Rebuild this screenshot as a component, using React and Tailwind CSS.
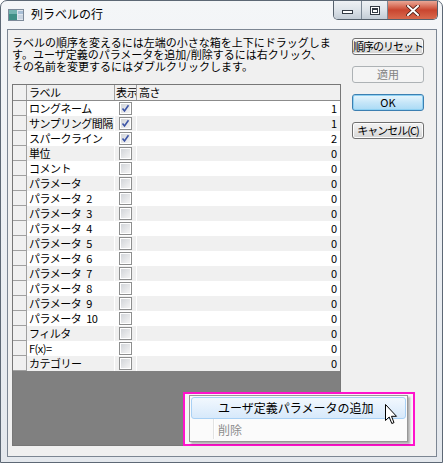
const rows = [
  ['ロングネーム', true, 1],
  ['サンプリング間隔', true, 1],
  ['スパークライン', true, 2],
  ['単位', false, 0],
  ['コメント', false, 0],
  ['パラメータ', false, 0],
  ['パラメータ 2', false, 0],
  ['パラメータ 3', false, 0],
  ['パラメータ 4', false, 0],
  ['パラメータ 5', false, 0],
  ['パラメータ 6', false, 0],
  ['パラメータ 7', false, 0],
  ['パラメータ 8', false, 0],
  ['パラメータ 9', false, 0],
  ['パラメータ 10', false, 0],
  ['フィルタ', false, 0],
  ['F(x)=', false, 0],
  ['カテゴリー', false, 0],
];

function CheckBox({ checked }) {
  return (
    <div className="w-[13px] h-[13px] border border-[#8e8f8f] bg-white p-[1px]">
      <div className="w-full h-full bg-gradient-to-br from-[#d2d5d9] to-[#f4f4f4] relative">
        {checked && (
          <svg viewBox="0 0 9 9" className="absolute inset-0 w-[9px] h-[9px]">
            <path d="M1.5 4.5 L3.5 7 L7.5 1.2" fill="none" stroke="#3d55a6" strokeWidth="1.6" />
          </svg>
        )}
      </div>
    </div>
  );
}

function Button({ children, variant }) {
  if (variant === 'disabled') {
    return (
      <div className="h-[17px] w-[72px] rounded-[3px] border border-[#adb2b5] bg-[#f4f4f4] flex items-center justify-center text-[#838383] leading-none whitespace-nowrap">
        {children}
      </div>
    );
  }
  if (variant === 'default') {
    return (
      <div className="h-[17px] w-[72px] rounded-[3px] border border-[#3c7fb1] bg-gradient-to-b from-[#e8f6fd] via-[#c6e6f8] to-[#a9daf5] shadow-[inset_0_0_0_1px_#8ed0f2] flex items-center justify-center leading-none whitespace-nowrap">
        {children}
      </div>
    );
  }
  return (
    <div className="h-[17px] w-[72px] rounded-[3px] border border-[#707070] bg-gradient-to-b from-[#f2f2f2] via-[#e6e6e6] to-[#d4d4d4] shadow-[inset_0_0_0_1px_#fcfcfc] flex items-center justify-center leading-none whitespace-nowrap tracking-[-1px]">
      {children}
    </div>
  );
}

function TitleIcon() {
  return (
    <svg width="16" height="12" viewBox="0 0 16 12">
      <rect x="0.5" y="0.5" width="15" height="11" fill="#dfe6ee" stroke="#7d8a99" />
      <rect x="1" y="1" width="8" height="10" fill="#3f8f86" />
      <rect x="1" y="1" width="8" height="4" fill="#73b3b0" />
      <rect x="10" y="2" width="5" height="3" fill="#a8bfd6" />
      <rect x="10" y="6" width="5" height="4" fill="#c9d5e2" />
    </svg>
  );
}

function WindowButtons() {
  return (
    <div className="flex h-[19px] rounded-b-[5px] border border-t-0 border-[#55606c] overflow-hidden">
      <div className="w-[28px] h-full bg-gradient-to-b from-[#eef1f4] via-[#dde3e9] to-[#c3ccd6] border-r border-[#7b8794] flex items-center justify-center">
        <div className="w-[11px] h-[4px] mt-[4px] border border-[#333a44] bg-white" />
      </div>
      <div className="w-[26px] h-full bg-gradient-to-b from-[#eef1f4] via-[#dde3e9] to-[#c3ccd6] border-r border-[#7b8794] flex items-center justify-center">
        <div className="w-[10px] h-[9px] border border-[#333a44] bg-white p-[1px]">
          <div className="w-full h-full border border-t-2 border-[#333a44]" />
        </div>
      </div>
      <div className="w-[49px] h-full bg-gradient-to-b from-[#e9a796] via-[#c9452f] to-[#d96a4e] flex items-center justify-center">
        <svg width="14" height="11" viewBox="0 0 14 11">
          <path d="M2 1 L12 10 M12 1 L2 10" stroke="#4a1c14" strokeWidth="3.6" strokeLinecap="square" />
          <path d="M2 1 L12 10 M12 1 L2 10" stroke="#ffffff" strokeWidth="2" strokeLinecap="square" />
        </svg>
      </div>
    </div>
  );
}

function Cursor() {
  return (
    <svg width="13" height="21" viewBox="0 0 13 21">
      <path
        d="M0.5 0.5 L0.5 16.5 L4.2 13 L6.8 19.5 L9 18.6 L6.5 12.3 L11.5 12.3 Z"
        fill="#ffffff"
        stroke="#000000"
        strokeWidth="1"
        strokeLinejoin="miter"
      />
    </svg>
  );
}

export default function App() {
  return (
    <div className="w-[443px] h-[464px] bg-white text-[11px] text-black font-['Noto_Sans_CJK_JP',sans-serif]">
      <div className="w-[443px] h-[463px] rounded-t-[7px] border border-[#5d6875] bg-gradient-to-b from-[#f4f6f8] via-[#eceff3] to-[#e4e8ed] flex flex-col">
        {/* title bar */}
        <div className="h-[28px] flex items-start shrink-0">
          <div className="ml-[7px] mt-[8px]">
            <TitleIcon />
          </div>
          <div className="ml-[7px] mt-[5px] text-[12px] leading-[16px]">列ラベルの行</div>
          <div className="ml-auto mr-[4px]">
            <WindowButtons />
          </div>
        </div>

        {/* client area */}
        <div className="relative flex-1 ml-[6px] mr-[5px] mb-[5px] border border-[#7c8693] bg-[#f0f0f0] flex">
          <div className="ml-[4px] w-[329px] flex flex-col">
            <div className="mt-[6px] leading-[12px] whitespace-nowrap">
              <div>ラベルの順序を変えるには左端の小さな箱を上下にドラッグしま</div>
              <div>す。ユーザ定義のパラメータを追加/削除するには右クリック、</div>
              <div>その名前を変更するにはダブルクリックします。</div>
            </div>

            <div className="mt-[12px] h-[362px] border border-[#777777] flex flex-col bg-[#808080]">
              <div className="h-[16px] flex bg-[#f0f0f0] border-b border-[#8c8c8c] leading-[15px]">
                <div className="w-[14px] shrink-0 border-r border-[#a0a0a0]" />
                <div className="w-[88px] shrink-0 pl-[2px] border-r border-[#a0a0a0] tracking-[-0.5px]">ラベル</div>
                <div className="w-[22px] shrink-0 pl-[1px] border-r border-[#a0a0a0] overflow-hidden whitespace-nowrap">表示</div>
                <div className="flex-1 pl-[2px] tracking-[-0.5px]">高さ</div>
              </div>
              {rows.map(([label, checked, value], i) => (
                <div
                  key={label}
                  className={`h-[15px] flex leading-[15px] ${i % 2 === 0 ? 'bg-white' : 'bg-[#f0f0f0]'}`}
                >
                  <div className="w-[14px] shrink-0 bg-[#f0f0f0] border-r border-b border-[#a0a0a0]" />
                  <div className="w-[88px] shrink-0 pl-[2px] border-r border-white whitespace-nowrap overflow-hidden tracking-[-0.5px] [word-spacing:3px]">{label}</div>
                  <div className="w-[22px] shrink-0 border-r border-white flex items-center justify-center">
                    <CheckBox checked={checked} />
                  </div>
                  <div className="flex-1 text-right pr-[3px]">{value}</div>
                </div>
              ))}
            </div>
          </div>

          <div className="ml-[11px] mt-[8px] flex flex-col gap-[11px]">
            <Button>順序のリセット</Button>
            <Button variant="disabled">適用</Button>
            <Button variant="default">OK</Button>
            <Button>キャンセル(C)</Button>
          </div>

          {/* context menu with highlight */}
          <div className="absolute left-[175px] top-[362px] w-[232px] h-[54px] border-2 border-[#ff12cc] bg-[#f6f6f6]">
            <div className="ml-[4px] mt-[1px] w-[219px] h-[47px] border border-[#979797] bg-[#fbfbfb] shadow-[2px_2px_2px_rgba(0,0,0,0.3)] flex flex-col pt-[1px] px-[1px] relative">
              <div className="absolute left-[23px] top-[23px] bottom-[2px] w-[2px] border-l border-[#e2e3e3] bg-white" />
              <div className="h-[22px] rounded-[3px] border border-[#a9d1f5] bg-gradient-to-b from-[#f2f8fe] to-[#d7e9fb] flex items-center pl-[26px] text-[12px]">
                ユーザ定義パラメータの追加
              </div>
              <div className="h-[22px] flex items-center pl-[27px] text-[12px] text-[#8d8d8d]">削除</div>
            </div>
          </div>
          <div className="absolute left-[377px] top-[374px]">
            <Cursor />
          </div>
        </div>
      </div>
    </div>
  );
}
